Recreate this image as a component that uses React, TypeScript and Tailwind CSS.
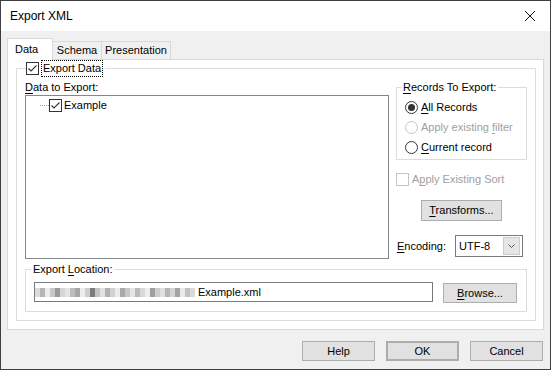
import React from 'react';

// greys for the redacted part of the export path
const blurBlocks = [
  '#dcdcdc', '#b4b4b4', '#ececec', '#c8c8c8', '#9a9a9a', '#d6d6d6', '#e4e4e4', '#bdbdbd',
  '#a6a6a6', '#ededed', '#cfcfcf', '#7c7c7c', '#c4c4c4', '#e2e2e2', '#b0b0b0', '#d2d2d2',
  '#ececec', '#a9a9a9', '#c9c9c9', '#e6e6e6', '#bababa', '#d8d8d8', '#eeeeee', '#9f9f9f',
  '#cdcdcd', '#e0e0e0', '#b6b6b6', '#d4d4d4', '#a3a3a3', '#e9e9e9', '#c2c2c2', '#dadada',
];

function CheckBox({ checked = false, disabled = false }: { checked?: boolean; disabled?: boolean }) {
  return (
    <svg width="13" height="13" viewBox="0 0 13 13" className="shrink-0">
      <rect x="0.5" y="0.5" width="12" height="12" fill="white" stroke={disabled ? '#c4c4c4' : '#333333'} />
      {checked && <path d="M2.5 6.5 L5 9 L10.5 3.5" fill="none" stroke="#333333" strokeWidth="1.1" />}
    </svg>
  );
}

function Radio({ checked = false, disabled = false }: { checked?: boolean; disabled?: boolean }) {
  return (
    <svg width="13" height="13" viewBox="0 0 13 13" className="shrink-0">
      <circle cx="6.5" cy="6.5" r="6" fill="white" stroke={disabled ? '#c4c4c4' : '#333333'} />
      {checked && <circle cx="6.5" cy="6.5" r="3.5" fill="#333333" />}
    </svg>
  );
}

function U({ children }: { children: React.ReactNode }) {
  return <span className="underline underline-offset-[2px]">{children}</span>;
}

function Button({ children, className = '' }: { children: React.ReactNode; className?: string }) {
  return (
    <div className={`flex items-center justify-center bg-[#e1e1e1] border border-[#adadad] ${className}`}>
      {children}
    </div>
  );
}

export default function App() {
  return (
    <div className="w-[551px] h-[370px] overflow-hidden bg-[#f0f0f0] border border-[#3f3f3f] flex flex-col text-[11px] leading-[13px] text-black font-['Liberation_Sans',Arial,sans-serif]">
      {/* title bar */}
      <div className="h-[30px] shrink-0 bg-white flex items-center justify-between pl-[9px] pr-[15px]">
        <span className="text-[12px]">Export XML</span>
        <svg width="10" height="10" viewBox="0 0 10 10">
          <path d="M0 0 L10 10 M10 0 L0 10" stroke="#111" strokeWidth="1" />
        </svg>
      </div>

      <div className="px-[6px] flex flex-col">
        {/* tabs */}
        <div className="mt-[7px] h-[21px] flex items-end">
          <div className="relative z-10 -mb-px h-[22px] w-[46px] bg-white border border-b-0 border-[#d9d9d9] flex items-center pl-[7px]">
            Data
          </div>
          <div className="h-[18px] w-[49px] border-t border-r border-[#d9d9d9] flex items-center justify-center">
            Schema
          </div>
          <div className="h-[18px] w-[69px] border-t border-r border-[#d9d9d9] flex items-center justify-center">
            Presentation
          </div>
        </div>

        {/* tab page */}
        <div className="h-[271px] bg-white border border-[#d9d9d9] pl-[8px] pr-[7px]">
          <fieldset className="border border-[#dcdcdc] px-[8px] pb-[8px]">
            <legend className="ml-[1px] pr-[2px]">
              <div className="flex items-center gap-[2px] h-[17px]">
                <CheckBox checked />
                <span className="h-[17px] px-[1px] flex items-center border border-dotted border-black">Export Data</span>
              </div>
            </legend>

            <div className="flex gap-[7px] pt-[4px]">
              {/* left column */}
              <div className="w-[364px] flex flex-col">
                <div className="h-[14px]">
                  <U>D</U>ata to Export:
                </div>
                <div className="h-[164px] border border-[#828790] bg-white pt-[3px] pl-[14px]">
                  <div className="flex items-center h-[13px]">
                    <div className="w-[9px] border-t border-dotted border-[#a0a0a0]" />
                    <CheckBox checked />
                    <span className="ml-[2px]">Example</span>
                  </div>
                </div>
              </div>

              {/* right column */}
              <div className="w-[131px] flex flex-col">
                <fieldset className="border border-[#dcdcdc] pl-[8px] pt-[3px] pb-[2px]">
                  <legend className="-ml-[4px] px-[2px]">
                    <U>R</U>ecords To Export:
                  </legend>
                  <div className="h-[20px] flex items-center gap-[3px]">
                    <Radio checked />
                    <span>
                      <U>A</U>ll Records
                    </span>
                  </div>
                  <div className="h-[20px] flex items-center gap-[3px] text-[#a0a0a0]">
                    <Radio disabled />
                    <span>
                      Apply existing <U>f</U>ilter
                    </span>
                  </div>
                  <div className="h-[20px] flex items-center gap-[3px]">
                    <Radio />
                    <span>
                      <U>C</U>urrent record
                    </span>
                  </div>
                </fieldset>

                <div className="mt-[13px] h-[13px] flex items-center gap-[3px] text-[#a0a0a0]">
                  <CheckBox disabled />
                  <span>
                    A<U>p</U>ply Existing Sort
                  </span>
                </div>

                <Button className="mt-[14px] self-center w-[81px] h-[21px]">
                  <span>
                    <U>T</U>ransforms...
                  </span>
                </Button>

                <div className="mt-[14px] flex items-center justify-between">
                  <span className="pl-[1px]">
                    <U>E</U>ncoding:
                  </span>
                  <div className="mr-[4px] w-[68px] h-[22px] border border-[#7a7a7a] bg-white flex items-center pl-[3px]">
                    <span>UTF-8</span>
                    <div className="ml-auto mr-[2px] w-[17px] h-[18px] border border-[#cccccc] bg-[#e6e6e6] flex items-center justify-center">
                      <svg width="7" height="4" viewBox="0 0 7 4">
                        <path d="M0.5 0.5 L3.5 3.5 L6.5 0.5" fill="none" stroke="#555" strokeWidth="1" />
                      </svg>
                    </div>
                  </div>
                </div>
              </div>
            </div>

            {/* export location */}
            <fieldset className="mt-[4px] border border-[#dcdcdc] pl-[8px] pr-[9px] pt-[6px] pb-[8px]">
              <legend className="-ml-[3px] px-[2px]">
                Export <U>L</U>ocation:
              </legend>
              <div className="flex items-start">
                <div className="flex-1 h-[20px] border border-[#7a7a7a] bg-white flex items-center">
                  <div className="flex items-center">
                    {blurBlocks.map((c, i) => (
                      <span key={i} className="w-[5px] h-[9px]" style={{ backgroundColor: c }} />
                    ))}
                  </div>
                  <span className="ml-[3px]">Example.xml</span>
                </div>
                <Button className="ml-[10px] mt-px w-[74px] h-[20px]">
                  <span>
                    <U>B</U>rowse...
                  </span>
                </Button>
              </div>
            </fieldset>
          </fieldset>
        </div>

        {/* dialog buttons */}
        <div className="mt-[11px] h-[20px] flex justify-end gap-[11px] pr-[1px]">
          <Button className="w-[73px] h-[20px]">Help</Button>
          <Button className="w-[73px] h-[20px] border-2 border-[#0078d7]">OK</Button>
          <Button className="w-[73px] h-[20px]">Cancel</Button>
        </div>
      </div>
    </div>
  );
}
